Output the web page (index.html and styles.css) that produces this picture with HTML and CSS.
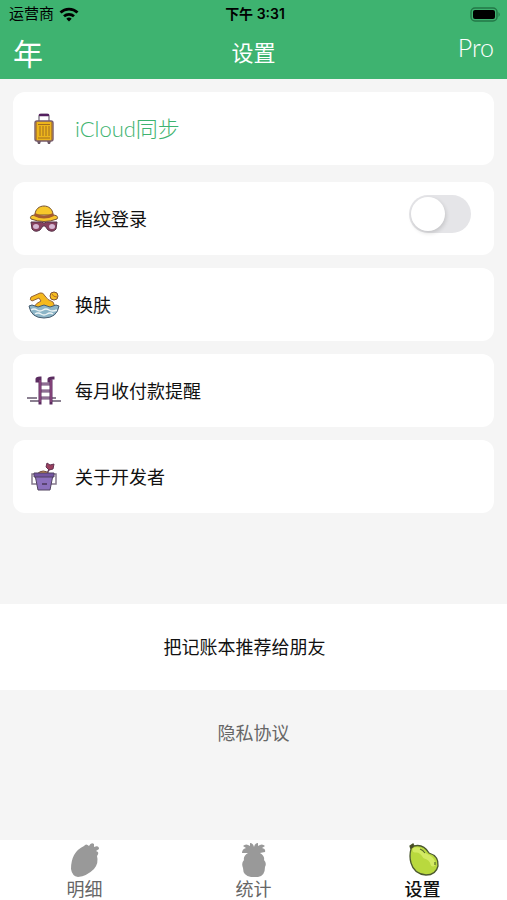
FILE: index.html
```html
<!DOCTYPE html>
<html lang="zh-CN">
<head>
    <meta charset="UTF-8">
    <meta name="viewport" content="width=device-width, initial-scale=1.0">
    <title>设置</title>
    <link rel="stylesheet" href="styles.css">
</head>
<body>
    <header class="header">
        <!-- 状态栏 -->
        <div class="status-bar">
            <div class="carrier">
                <span>运营商</span>
                <svg class="wifi" viewBox="0 0 20 15" aria-hidden="true">
                    <path d="M1.5 5.6C6.2 1 13.800 1 18.500 5.600" fill="none" stroke="#000" stroke-width="2.800"/>
                    <path d="M5 9.300C7.800 6.600 12.200 6.600 15 9.300" fill="none" stroke="#000" stroke-width="2.700"/>
                    <path d="M7.300 11.700Q10 9.500 12.700 11.700L10 14.600Z"/>
                </svg>
            </div>
            <span class="time">下午 3:31</span>
            <svg class="battery" viewBox="0 0 31 15" aria-hidden="true">
                <rect x="1" y="1" width="26" height="13" rx="4" fill="none" stroke="#237847" stroke-width="1.500"/>
                <rect x="3" y="3" width="22" height="9" rx="2"/>
                <path d="M28.500 5Q31 7.500 28.500 10Z" fill="#237847"/>
            </svg>
        </div>

        <!-- 导航栏 -->
        <nav class="nav-bar">
            <a class="nav-year" href="#year">年</a>
            <h1>设置</h1>
            <a class="nav-pro" href="#pro">Pro</a>
        </nav>
    </header>

    <main>
        <div class="list">
            <a class="card card-sync" href="#icloud">
                <svg class="icon" viewBox="0 0 34 34" aria-hidden="true">
                    <path d="M12 10V4.500Q12 2.500 14 2.500H20Q22 2.500 22 4.500V10" fill="none" stroke="#76707d" stroke-width="1.300"/>
                    <path d="M13 3H21" stroke="#542060" stroke-width="2.400" stroke-linecap="round"/>
                    <path d="M10 29h4l-1 3h-2zM20 29h4l-1 3h-2z" fill="#6b5967"/>
                    <rect x="8" y="9" width="18" height="20" rx="2" fill="#edb51b" stroke="#775b6b" stroke-width="1.400"/>
                    <path d="M9.500 10v18M24.500 10v18" stroke="#bc8426"/>
                    <path d="M11 12.500H23M11 26H23M13 14v10M16 14v10M19 14v10M22 14v10" stroke="#a06c20" stroke-width="1"/>
                </svg>
                <span>iCloud同步</span>
            </a>

            <div class="card">
                <svg class="icon" viewBox="0 0 34 34" aria-hidden="true">
                    <path d="M8 13C8 1 26 1 26 13Z" fill="#f7c72a" stroke="#755234"/>
                    <path d="M7 13Q2 14 4 17Q17 22 30 17Q32 14 27 13Q17 18 7 13Z" fill="#f8c62d" stroke="#755234"/>
                    <path d="M8 11Q17 16 26 11L27 14Q17 19 7 14Z" fill="#a55b2f"/>
                    <path d="M4 20H14Q17 22 20 20H30L29 27Q26 31 21 28L18 24H16L13 28Q8 31 5 27Z" fill="#86405e" stroke="#57344a"/>
                    <ellipse cx="9" cy="24.500" rx="3" ry="2.500" fill="#d5b6d2"/>
                    <ellipse cx="25" cy="24.500" rx="3" ry="2.500" fill="#d5b6d2"/>
                </svg>
                <label for="touch-id">指纹登录</label>
                <input class="switch" type="checkbox" role="switch" id="touch-id">
            </div>

            <a class="card" href="#theme">
                <svg class="icon" viewBox="0 0 34 34" aria-hidden="true">
                    <path d="M7 19Q9 15 14 13L12 10L5 13Q2 12 4 9L13 5Q16 4 18 8Q20 12 26 14Q28 17 27 20H6Z" fill="#f5b91e" stroke="#94633b"/>
                    <circle cx="27" cy="8" r="4" fill="#f6bd20" stroke="#80553b"/>
                    <path d="M25 6Q26 9 30 9" fill="none" stroke="#b16c29"/>
                    <path d="M2 18Q5 16 8 18T14 18T20 18T26 18T32 18Q30 30 17 30Q4 30 2 18Z" fill="#8cb5c7" stroke="#465c70"/>
                    <path d="M4 22Q7 20 10 22T16 22T22 22T30 22M8 26Q11 24 14 26T20 26T26 26" fill="none" stroke="#edf4f5" stroke-width="1.500"/>
                </svg>
                <span>换肤</span>
            </a>

            <a class="card" href="#reminder">
                <svg class="icon" viewBox="0 0 34 34" aria-hidden="true">
                    <path d="M0 24H10M24 24H29M3 27H12M23 27H34" stroke="#66576d" stroke-width="1.300"/>
                    <path d="M12 10H24M12 17H24M12 24H24" stroke="#67456f" stroke-width="3"/>
                    <path d="M12 10H24M12 17H24M12 24H24" stroke="#b797b8"/>
                    <path d="M10 7V5Q10 4 13 4V29M22 7V5Q22 4 26 4M24 5V29" fill="none" stroke="#5b2c60" stroke-width="3" stroke-linecap="square"/>
                    <path d="M13 6V28M24 6V28" stroke="#a8578f"/>
                </svg>
                <span>每月收付款提醒</span>
            </a>

            <a class="card" href="#about">
                <svg class="icon" viewBox="0 0 34 34" aria-hidden="true">
                    <path d="M19 15L23 8" stroke="#593655" stroke-width="1.500"/>
                    <path d="M20 3L23 5L27 4L26 9L22 10L19 7Z" fill="#9b405f" stroke="#643352"/>
                    <path d="M10 14Q16 8 23 14Z" fill="#d99b48" stroke="#6e4d43"/>
                    <path d="M8 14H5V24H10M26 14H29V24H24" fill="none" stroke="#85798d" stroke-width="1.500"/>
                    <path d="M8 15H26L23 30H11Z" fill="#8c70bd" stroke="#51435f"/>
                    <path d="M7 13H27V17H7Z" fill="#7354a1" stroke="#514060"/>
                    <path d="M15 24H20" stroke="#49365a" stroke-width="1.500"/>
                </svg>
                <span>关于开发者</span>
            </a>
        </div>

        <button class="share-button" type="button">把记账本推荐给朋友</button>
        <a class="privacy" href="#privacy">隐私协议</a>
    </main>

    <!-- 底部标签栏 -->
    <nav class="tab-bar">
        <a class="tab" href="#details">
            <svg class="tab-icon" viewBox="0 0 36 36" aria-hidden="true">
                <path d="M17 4Q19 1 22 4Q24 0 27 2L27 5Q32 3 32 7L29 9Q33 10 30 14Q32 21 27 27Q20 34 11 35Q5 34 4 27Q4 10 17 4Z" fill="#999"/>
            </svg>
            <span>明细</span>
        </a>
        <a class="tab" href="#stats">
            <svg class="tab-icon" viewBox="0 0 36 36" aria-hidden="true">
                <path d="M18 5Q19 1 22 1L22 4Q26 1 29 4L26 6Q30 7 29 10L24 11Q29 14 28 18Q31 21 29 25Q29 34 22 35H15Q7 34 7 26Q5 21 8 18Q7 14 12 11L6 11Q6 7 10 6L7 4Q10 1 14 4L14 1Q17 1 18 5Z" fill="#999"/>
            </svg>
            <span>统计</span>
        </a>
        <a class="tab active" href="#settings">
            <svg class="tab-icon" viewBox="0 0 36 36" aria-hidden="true">
                <path d="M5 4L8 2L9 4C17 2 21 6 24 11Q34 14 33 24Q31 33 21 33Q9 32 6 21Q4 14 6 7Z" fill="#b9d93e"/>
                <path d="M10 8Q16 7 20 14Q27 16 28 22" fill="none" stroke="#d3ea63" stroke-width="5" stroke-linecap="round"/>
                <path d="M5 4L8 2L9 4C17 2 21 6 24 11Q34 14 33 24Q31 33 21 33Q9 32 6 21Q4 14 6 7Z" fill="none" stroke="#4c5930" stroke-width="1.300"/>
                <path d="M15 7Q18 8 20 11M30 20V23" fill="none" stroke="#566f25" stroke-width="1.200"/>
                <path d="M5 4L8 2L9 5L6 7Z" fill="#494a27"/>
            </svg>
            <span>设置</span>
        </a>
    </nav>
</body>
</html>
```
FILE: styles.css
```css
* {
    box-sizing: border-box;
}

body {
    font-family: Lato, "Noto Sans CJK SC", sans-serif;
    font-size: 18px;
    line-height: 24px;
    background-color: #f5f5f5;
    color: #111;
    margin: 0;
    min-height: 100vh;
    display: flex;
    flex-direction: column;
}

a {
    color: inherit;
    text-decoration: none;
}

/* 顶部 */
.header {
    background-color: #3eb370;
    padding-bottom: 1px;
}

.status-bar,
.nav-bar {
    display: grid;
    grid-template-columns: 1fr auto 1fr;
    align-items: center;
}

.status-bar {
    height: 28px;
    padding: 0 6px 0 9px;
    font-family: Inter, "Noto Sans CJK SC", sans-serif;
    font-size: 15px;
    color: #000;
}

.carrier {
    display: flex;
    align-items: center;
    gap: 5px;
}

.wifi {
    width: 20px;
    height: 15px;
}

.time {
    font-size: 14px;
    font-weight: 600;
}

.battery {
    width: 31px;
    height: 15px;
    justify-self: end;
}

.nav-bar {
    height: 50px;
    padding: 0 13px;
    color: #fff;
}

.nav-bar h1 {
    margin: 0;
    font-size: 22px;
    font-weight: 400;
}

.nav-year {
    font-size: 30px;
}

.nav-pro {
    justify-self: end;
    align-self: start;
    padding-top: 7px;
    font-size: 25px;
    font-weight: 300;
}

/* 设置列表 */
main {
    flex: 1;
    display: flex;
    flex-direction: column;
}

.list {
    display: flex;
    flex-direction: column;
    gap: 13px;
    padding: 13px;
}

.card {
    display: flex;
    align-items: center;
    gap: 14px;
    height: 73px;
    padding: 0 23px 0 14px;
    border-radius: 12px;
    background-color: #fff;
}

.card-sync {
    margin-bottom: 4px;
    font-size: 22px;
    font-weight: 300;
    color: #3eb370;
}

.icon {
    width: 34px;
    height: 34px;
}

/* 开关 */
.switch {
    appearance: none;
    width: 62px;
    height: 38px;
    margin: 0 0 10px auto;
    padding: 2px;
    border-radius: 19px;
    background-color: #e5e5e8;
    cursor: pointer;
}

.switch::before {
    content: "";
    display: block;
    width: 34px;
    height: 34px;
    border-radius: 50%;
    background-color: #fff;
    box-shadow: 1px 2px 4px rgba(0, 0, 0, 0.15);
}

.switch:checked {
    background-color: #3eb370;
}

.switch:checked::before {
    margin-left: 24px;
}

.share-button {
    height: 86px;
    margin-top: 78px;
    padding: 0 18px 0 0;
    border: none;
    background-color: #fff;
    color: #111;
    font: inherit;
    cursor: pointer;
}

.privacy {
    align-self: center;
    margin: 31px 0;
    color: #666;
}

/* 标签栏 */
.tab-bar {
    display: grid;
    grid-template-columns: repeat(3, 1fr);
    height: 60px;
    background-color: #fff;
}

.tab {
    display: flex;
    flex-direction: column;
    align-items: center;
    padding-top: 2px;
    color: #666;
}

.tab-icon {
    width: 36px;
    height: 36px;
    flex-shrink: 0;
}

.tab span {
    line-height: 22px;
}

.tab.active {
    color: #111;
    font-weight: 500;
}
```
